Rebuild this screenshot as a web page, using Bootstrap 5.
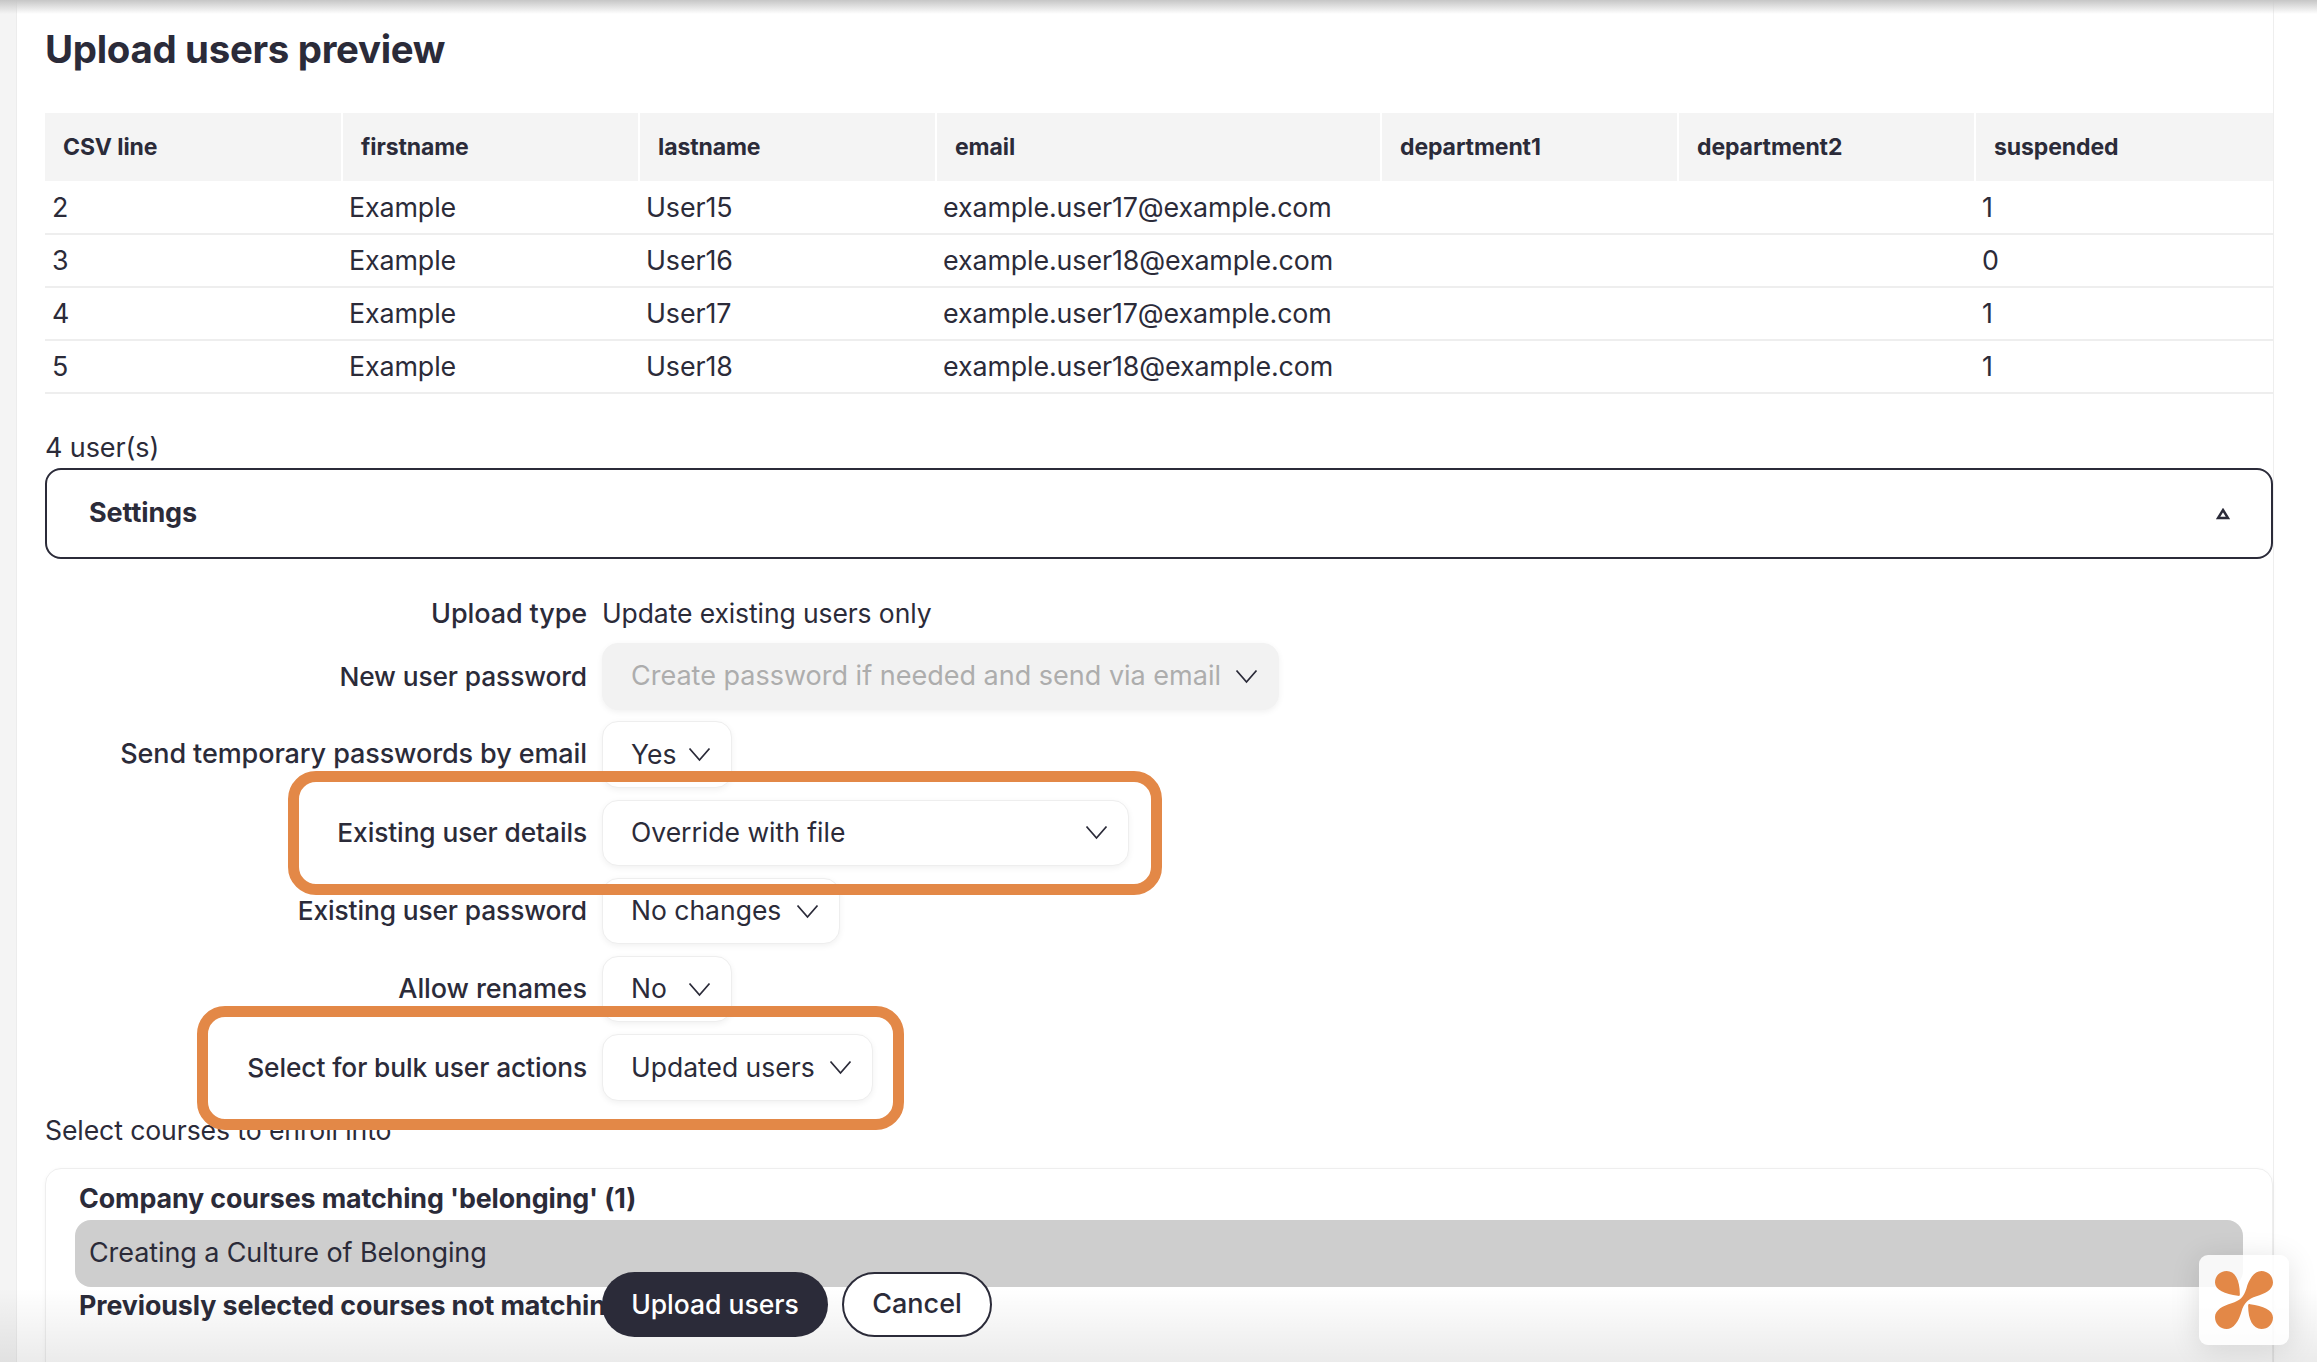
<!DOCTYPE html>
<html lang="en">
<head>
<meta charset="utf-8">
<title>Upload users preview</title>
<link href="https://cdn.jsdelivr.net/npm/bootstrap@5.3.0/dist/css/bootstrap.min.css" rel="stylesheet">
<style>
html,body{height:100%;overflow:hidden;}
body{font-family:Inter,"Noto Sans",sans-serif;color:#2b2b39;font-size:27px;background:#fff;letter-spacing:-.1px;}
.shell{height:1362px;position:relative;overflow:hidden;}
.strip{width:17px;background:#f4f4f4;border-right:1px solid #ececec;flex:none;}
.mainpane{width:2257px;flex:none;padding-left:28px;border-right:1px solid #eee;}
.topshade{position:absolute;left:0;right:0;top:0;height:14px;background:linear-gradient(#c6c6c6,#fff0);}
.pagehead{font-size:38.4px;font-weight:700;line-height:48px;margin:25px 0 40px;letter-spacing:-.3px;color:#2b2b39;}
.pvtable{table-layout:fixed;width:2228px;margin:0;color:#2b2b39;--bs-table-color:#2b2b39;}
.pvtable th{height:68px;padding:0 18px;background:#f4f4f4;font-size:23px;font-weight:700;vertical-align:middle;border-left:2px solid #fff;border-bottom:0;box-shadow:none;}
.pvtable th:first-child{border-left:0;}
.pvtable td{height:53px;padding:0 7px;font-size:26.8px;vertical-align:middle;border-bottom:2px solid #eee;box-shadow:none;}
.cw{width:297px;}
.cw-mail{width:445px;}
.cw-last{width:298px;}
.usercount{line-height:40px;margin-top:34px;}
.setbox{height:91px;border:2px solid #2b2b39;border-radius:16px;padding:0 41px 0 42px;font-weight:700;}
.formstack{margin-top:35px;gap:11.7px;}
.frow{min-height:66.5px;gap:15px;}
.frow-static{min-height:38px;margin-bottom:-3px;}
.flabel{width:542px;flex:none;text-align:right;font-weight:550;font-size:27px;}
.flabel-sm{font-size:26.3px;}
.fvalue{font-size:26.5px;}
.sel{height:66.5px;font-size:26.5px;color:#2b2b39;border:1px solid #eee;border-radius:16px;padding:0 50px 0 28px;box-shadow:0 2px 6px rgba(0,0,0,.06);background-color:#fff;
background-size:23px 15px;background-position:right 20px center;
background-image:url("data:image/svg+xml,%3Csvg xmlns='http://www.w3.org/2000/svg' viewBox='0 0 23 15'%3E%3Cpath d='M1.5 1.5 11.5 13 21.5 1.5' fill='none' stroke='%232b2b39' stroke-width='1.8'/%3E%3C/svg%3E");}
.sel-wide{font-size:27px;}
.sel:disabled{background-color:#f2f2f2;color:#adadad;border-color:#f2f2f2;}
.w130{width:130px;}.w238{width:238px;}.w271{width:271px;}.w527{width:527px;}.w677{width:677px;}
.coursehead{line-height:40px;margin-top:9px;font-size:26.6px;}
.coursebox{margin-top:18px;border:1px solid #eee;border-radius:16px 16px 0 0;padding:11px 29px 60px 29px;height:300px;box-shadow:0 1px 4px rgba(0,0,0,.04);}
.grouptitle{font-weight:700;font-size:26.8px;line-height:36px;padding-left:4px;white-space:nowrap;}
.grouptitle-next{margin-top:0;}
.courseopt{height:67px;margin-top:4px;background:#cecece;border-radius:16px;padding:0 14px;font-size:27px;}
.fadebar{position:absolute;left:0;right:0;bottom:0;height:74px;background:linear-gradient(rgba(0,0,0,0),rgba(0,0,0,.08));pointer-events:none;}
.actionbar{position:absolute;left:602px;top:1272px;gap:14px;}
.btn-main{height:65px;width:226px;border-radius:33px;background:#2b2b39;color:#fff;font-size:26.5px;font-weight:500;border:0;}
.btn-main:hover{background:#2b2b39;color:#fff;}
.btn-ghost{height:65px;width:150px;border-radius:33px;background:#fff;color:#2b2b39;font-size:27px;font-weight:500;border:2px solid #2b2b39;}
.orangebox{position:absolute;border:11px solid #e38847;border-radius:28px;pointer-events:none;}
.ob1{left:288px;top:771px;width:874px;height:124px;}
.ob2{left:197px;top:1006px;width:707px;height:124px;}
.logotile{position:absolute;left:2199px;top:1255px;width:90px;height:90px;border-radius:9px;background:rgba(255,255,255,.85);box-shadow:0 4px 30px rgba(0,0,0,.12);}
.logotile svg{width:58px;height:58px;}
</style>
</head>
<body>
<div class="shell d-flex">
  <div class="strip"></div>
  <div class="mainpane">
    <div class="pagehead">Upload users preview</div>
    <table class="table pvtable">
      <colgroup><col class="cw"><col class="cw"><col class="cw"><col class="cw-mail"><col class="cw"><col class="cw"><col class="cw-last"></colgroup>
      <thead><tr><th>CSV line</th><th>firstname</th><th>lastname</th><th>email</th><th>department1</th><th>department2</th><th>suspended</th></tr></thead>
      <tbody>
        <tr><td>2</td><td>Example</td><td>User15</td><td>example.user17@example.com</td><td></td><td></td><td>1</td></tr>
        <tr><td>3</td><td>Example</td><td>User16</td><td>example.user18@example.com</td><td></td><td></td><td>0</td></tr>
        <tr><td>4</td><td>Example</td><td>User17</td><td>example.user17@example.com</td><td></td><td></td><td>1</td></tr>
        <tr><td>5</td><td>Example</td><td>User18</td><td>example.user18@example.com</td><td></td><td></td><td>1</td></tr>
      </tbody>
    </table>
    <div class="usercount">4 user(s)</div>
    <div class="setbox d-flex align-items-center justify-content-between">
      <span>Settings</span>
      <svg width="14" height="12" viewBox="0 0 14 12"><path d="M7 2 12 10H2Z" fill="none" stroke="#2b2b39" stroke-width="2.4"/></svg>
    </div>
    <div class="formstack d-flex flex-column">
      <div class="frow frow-static d-flex align-items-center"><div class="flabel">Upload type</div><div class="fvalue">Update existing users only</div></div>
      <div class="frow d-flex align-items-center"><label class="flabel flabel-sm">New user password</label><select class="form-select sel sel-wide w677" disabled><option>Create password if needed and send via email</option></select></div>
      <div class="frow d-flex align-items-center"><label class="flabel">Send temporary passwords by email</label><select class="form-select sel w130"><option>Yes</option></select></div>
      <div class="frow d-flex align-items-center"><label class="flabel flabel-sm">Existing user details</label><select class="form-select sel w527"><option>Override with file</option></select></div>
      <div class="frow d-flex align-items-center"><label class="flabel flabel-sm">Existing user password</label><select class="form-select sel w238"><option>No changes</option></select></div>
      <div class="frow d-flex align-items-center"><label class="flabel">Allow renames</label><select class="form-select sel w130"><option>No</option></select></div>
      <div class="frow d-flex align-items-center"><label class="flabel flabel-sm">Select for bulk user actions</label><select class="form-select sel w271"><option>Updated users</option></select></div>
    </div>
    <div class="coursehead">Select courses to enroll into</div>
    <div class="coursebox">
      <div class="grouptitle">Company courses matching 'belonging' (1)</div>
      <div class="courseopt d-flex align-items-center">Creating a Culture of Belonging</div>
      <div class="grouptitle grouptitle-next">Previously selected courses not matching</div>
    </div>
  </div>
  <div class="orangebox ob1"></div>
  <div class="orangebox ob2"></div>
  <div class="fadebar"></div>
  <div class="actionbar d-flex">
    <button class="btn btn-main" type="button">Upload users</button>
    <button class="btn btn-ghost" type="button">Cancel</button>
  </div>
  <div class="logotile d-flex align-items-center justify-content-center">
    <svg viewBox="345 213 175 175"><g fill="#e38847">
      <path d="M380 213C405 213 420 240 420 283C420 288 418 289 414 288C375 283 345 270 345 248C345 228 360 213 380 213Z"/>
      <path d="M380 213C405 213 420 240 420 283C420 288 418 289 414 288C375 283 345 270 345 248C345 228 360 213 380 213Z" transform="rotate(180 432.5 300.5)"/>
      <path d="M485 213C505 213 520 228 520 248C520 270 495 282 470 289C445 296 432 310 425 335C417 365 400 388 380 388C360 388 345 372 345 352C345 330 370 317 395 310C420 303 432 292 440 265C447 240 462 213 485 213Z"/>
    </g></svg>
  </div>
  <div class="topshade"></div>
</div>
<script src="https://cdn.jsdelivr.net/npm/bootstrap@5.3.0/dist/js/bootstrap.bundle.min.js"></script>
</body>
</html>
